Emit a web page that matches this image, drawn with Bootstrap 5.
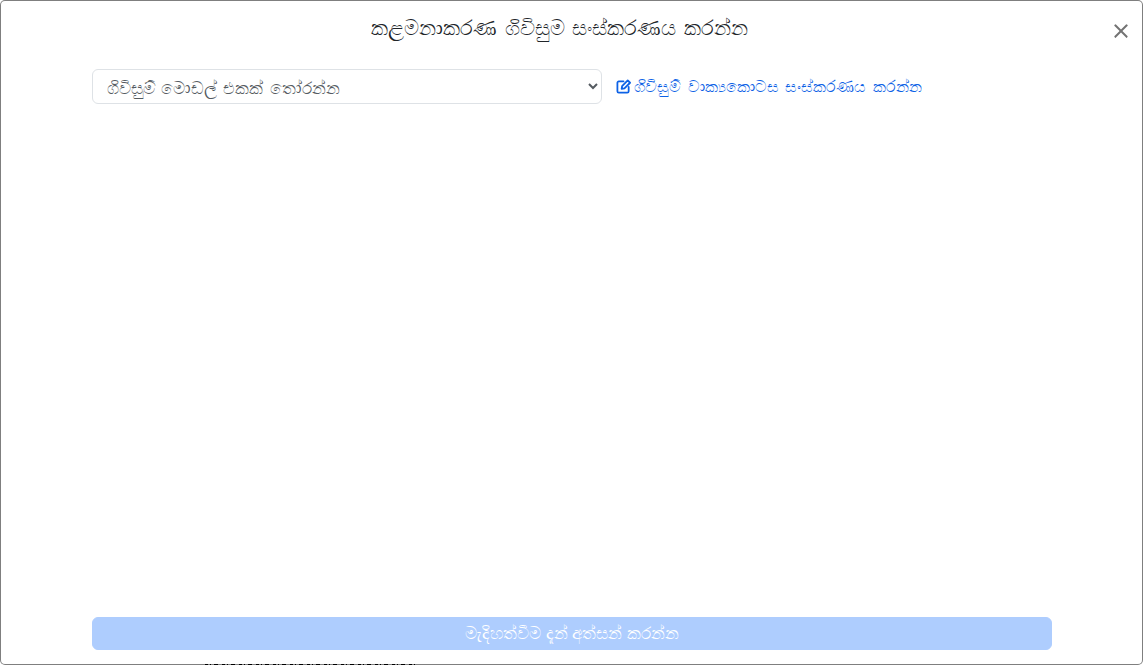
<!DOCTYPE html>
<html lang="si">
<head>
<meta charset="utf-8">
<title>ගිවිසුම සංස්කරණය</title>
<link rel="stylesheet" href="https://cdn.jsdelivr.net/npm/bootstrap@5.3.0/dist/css/bootstrap.min.css">
<style>
html, body { height: 100%; overflow: hidden; background: #fff; }
body { font-family: "Noto Sans", "Liberation Sans", sans-serif; }
.under-strip { top: 664px; left: 205px; width: 213px; height: 1px; z-index: 0; background: repeating-linear-gradient(90deg, #000 0 3px, transparent 3px 5px, #000 5px 6px, transparent 6px 9px, #000 9px 13px, transparent 13px 17px); }
.sheet { z-index: 1; height: 665px; border: 1px solid rgba(0,0,0,.5); border-radius: 5px; padding: 0 90px 14px 91px; background: #fff; background-clip: padding-box; }
.sheet-head { height: 68px; padding-right: 25px; }
.sheet-title { font-size: 21.1px; word-spacing: 2.3px; line-height: 1.2; padding-top: 13px; color: #212529; }
.sheet .btn-close { top: 22px; right: 13px; width: 16px; height: 16px; padding: 0; background-size: 16px; opacity: .55; }
.tool-row { gap: 14px; }
.model-select { width: 510px; height: 35px; padding: 0 10px; font-size: 17.4px; word-spacing: 1.7px; color: #555b61; appearance: auto; -webkit-appearance: auto; background-image: none; }
.edit-link { gap: 3px; font-size: 16.45px; word-spacing: 2.3px; color: #0d62e6; margin-top: 5px; }
.edit-link svg { width: 15px; height: 15px; }
.sign-btn:disabled { height: 33px; font-size: 16.76px; line-height: 1; padding: 0; background: #aecdfe; border-color: #aecdfe; color: #fff; opacity: 1; }
</style>
</head>
<body>
<div class="under-strip position-absolute" aria-hidden="true"></div>
<div class="sheet position-relative d-flex flex-column">
  <div class="sheet-head text-center">
    <h1 class="sheet-title fw-normal m-0">කළමනාකරණ ගිවිසුම සංස්කරණය කරන්න</h1>
    <button type="button" class="btn-close position-absolute" aria-label="Close"></button>
  </div>
  <div class="tool-row d-flex flex-grow-1 align-items-start">
    <select class="form-select model-select">
      <option>ගිවිසුම් මොඩල් එකක් තෝරන්න</option>
    </select>
    <a href="#" class="edit-link text-decoration-none d-inline-flex align-items-center">
      <svg viewBox="0 0 16 16" fill="none" stroke="currentColor" stroke-width="1.9" stroke-linecap="round" stroke-linejoin="round"><path d="M8 2.500H3a1.500 1.500 0 0 0-1.500 1.500v9A1.500 1.500 0 0 0 3 14.500h9a1.500 1.500 0 0 0 1.500-1.500V8.500"/><path d="M6 10.500l.5-3L12.500 1.500l2.500 2.500-6 6z"/></svg>
      <span>ගිවිසුම් වාක්‍යකොටස සංස්කරණය කරන්න</span>
    </a>
  </div>
  <button type="button" class="btn btn-primary sign-btn w-100 flex-shrink-0" disabled>මැදිහත්වීම දැන් අත්සන් කරන්න</button>
</div>
</body>
</html>
